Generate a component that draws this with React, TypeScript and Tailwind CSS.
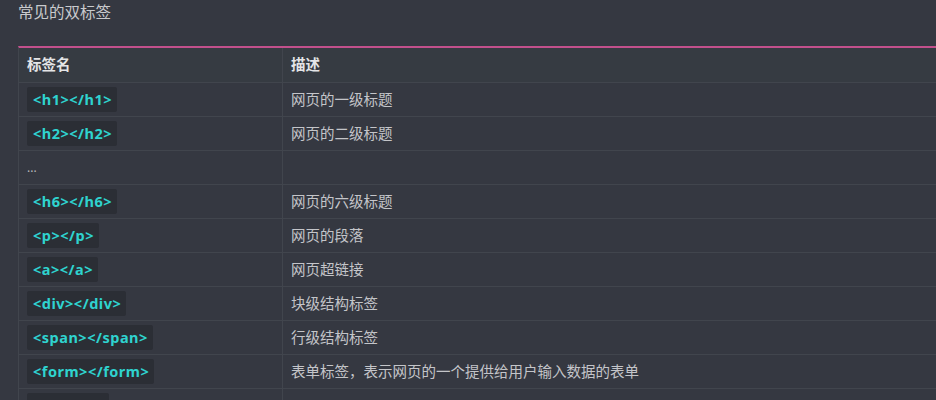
import React from 'react';

interface Row {
  tag: string | null;
  desc: string;
}

const rows: Row[] = [
  { tag: '<h1></h1>', desc: '网页的一级标题' },
  { tag: '<h2></h2>', desc: '网页的二级标题' },
  { tag: null, desc: '' },
  { tag: '<h6></h6>', desc: '网页的六级标题' },
  { tag: '<p></p>', desc: '网页的段落' },
  { tag: '<a></a>', desc: '网页超链接' },
  { tag: '<div></div>', desc: '块级结构标签' },
  { tag: '<span></span>', desc: '行级结构标签' },
  { tag: '<form></form>', desc: '表单标签，表示网页的一个提供给用户输入数据的表单' },
  { tag: '<ul></ul>', desc: '' },
];

const font = { fontFamily: '"Noto Sans", "Noto Sans CJK SC", sans-serif' };

const App: React.FC = () => {
  return (
    <div className="h-[400px] w-[936px] overflow-hidden bg-[#353841] pl-[18px]" style={font}>
      <div className="h-[46px] pt-[1px] text-[15.5px] leading-[22px] text-[#c9cacd]">常见的双标签</div>

      <div className="w-[930px] border-t-2 border-l border-t-[#c2508c] border-l-[#41454d]">
        {/* header */}
        <div className="flex h-[35px] border-b border-[#41454d] bg-[#363b42] text-[14.5px] font-bold text-[#e4e5e7]">
          <div className="flex w-[264px] items-center border-r border-[#41454d] px-2">标签名</div>
          <div className="flex flex-1 items-center px-2">描述</div>
        </div>

        {rows.map((row, i) => (
          <div key={i} className="flex h-[34px] border-b border-[#41454d] text-[14.5px] text-[#c4c5c9]">
            <div className="flex w-[264px] items-center border-r border-[#41454d] px-2">
              {row.tag ? (
                <code
                  className="rounded-[2px] bg-[#2b2e35] pl-[6px] pr-[5px] py-[2px] text-[14.5px] font-bold tracking-[0.5px] text-[#2fd3cf]"
                  style={font}
                >
                  {row.tag}
                </code>
              ) : (
                <span className="text-[12px] text-[#b5b6ba]">...</span>
              )}
            </div>
            <div className="flex flex-1 items-center px-2">{row.desc}</div>
          </div>
        ))}
      </div>
    </div>
  );
};

export default App;
